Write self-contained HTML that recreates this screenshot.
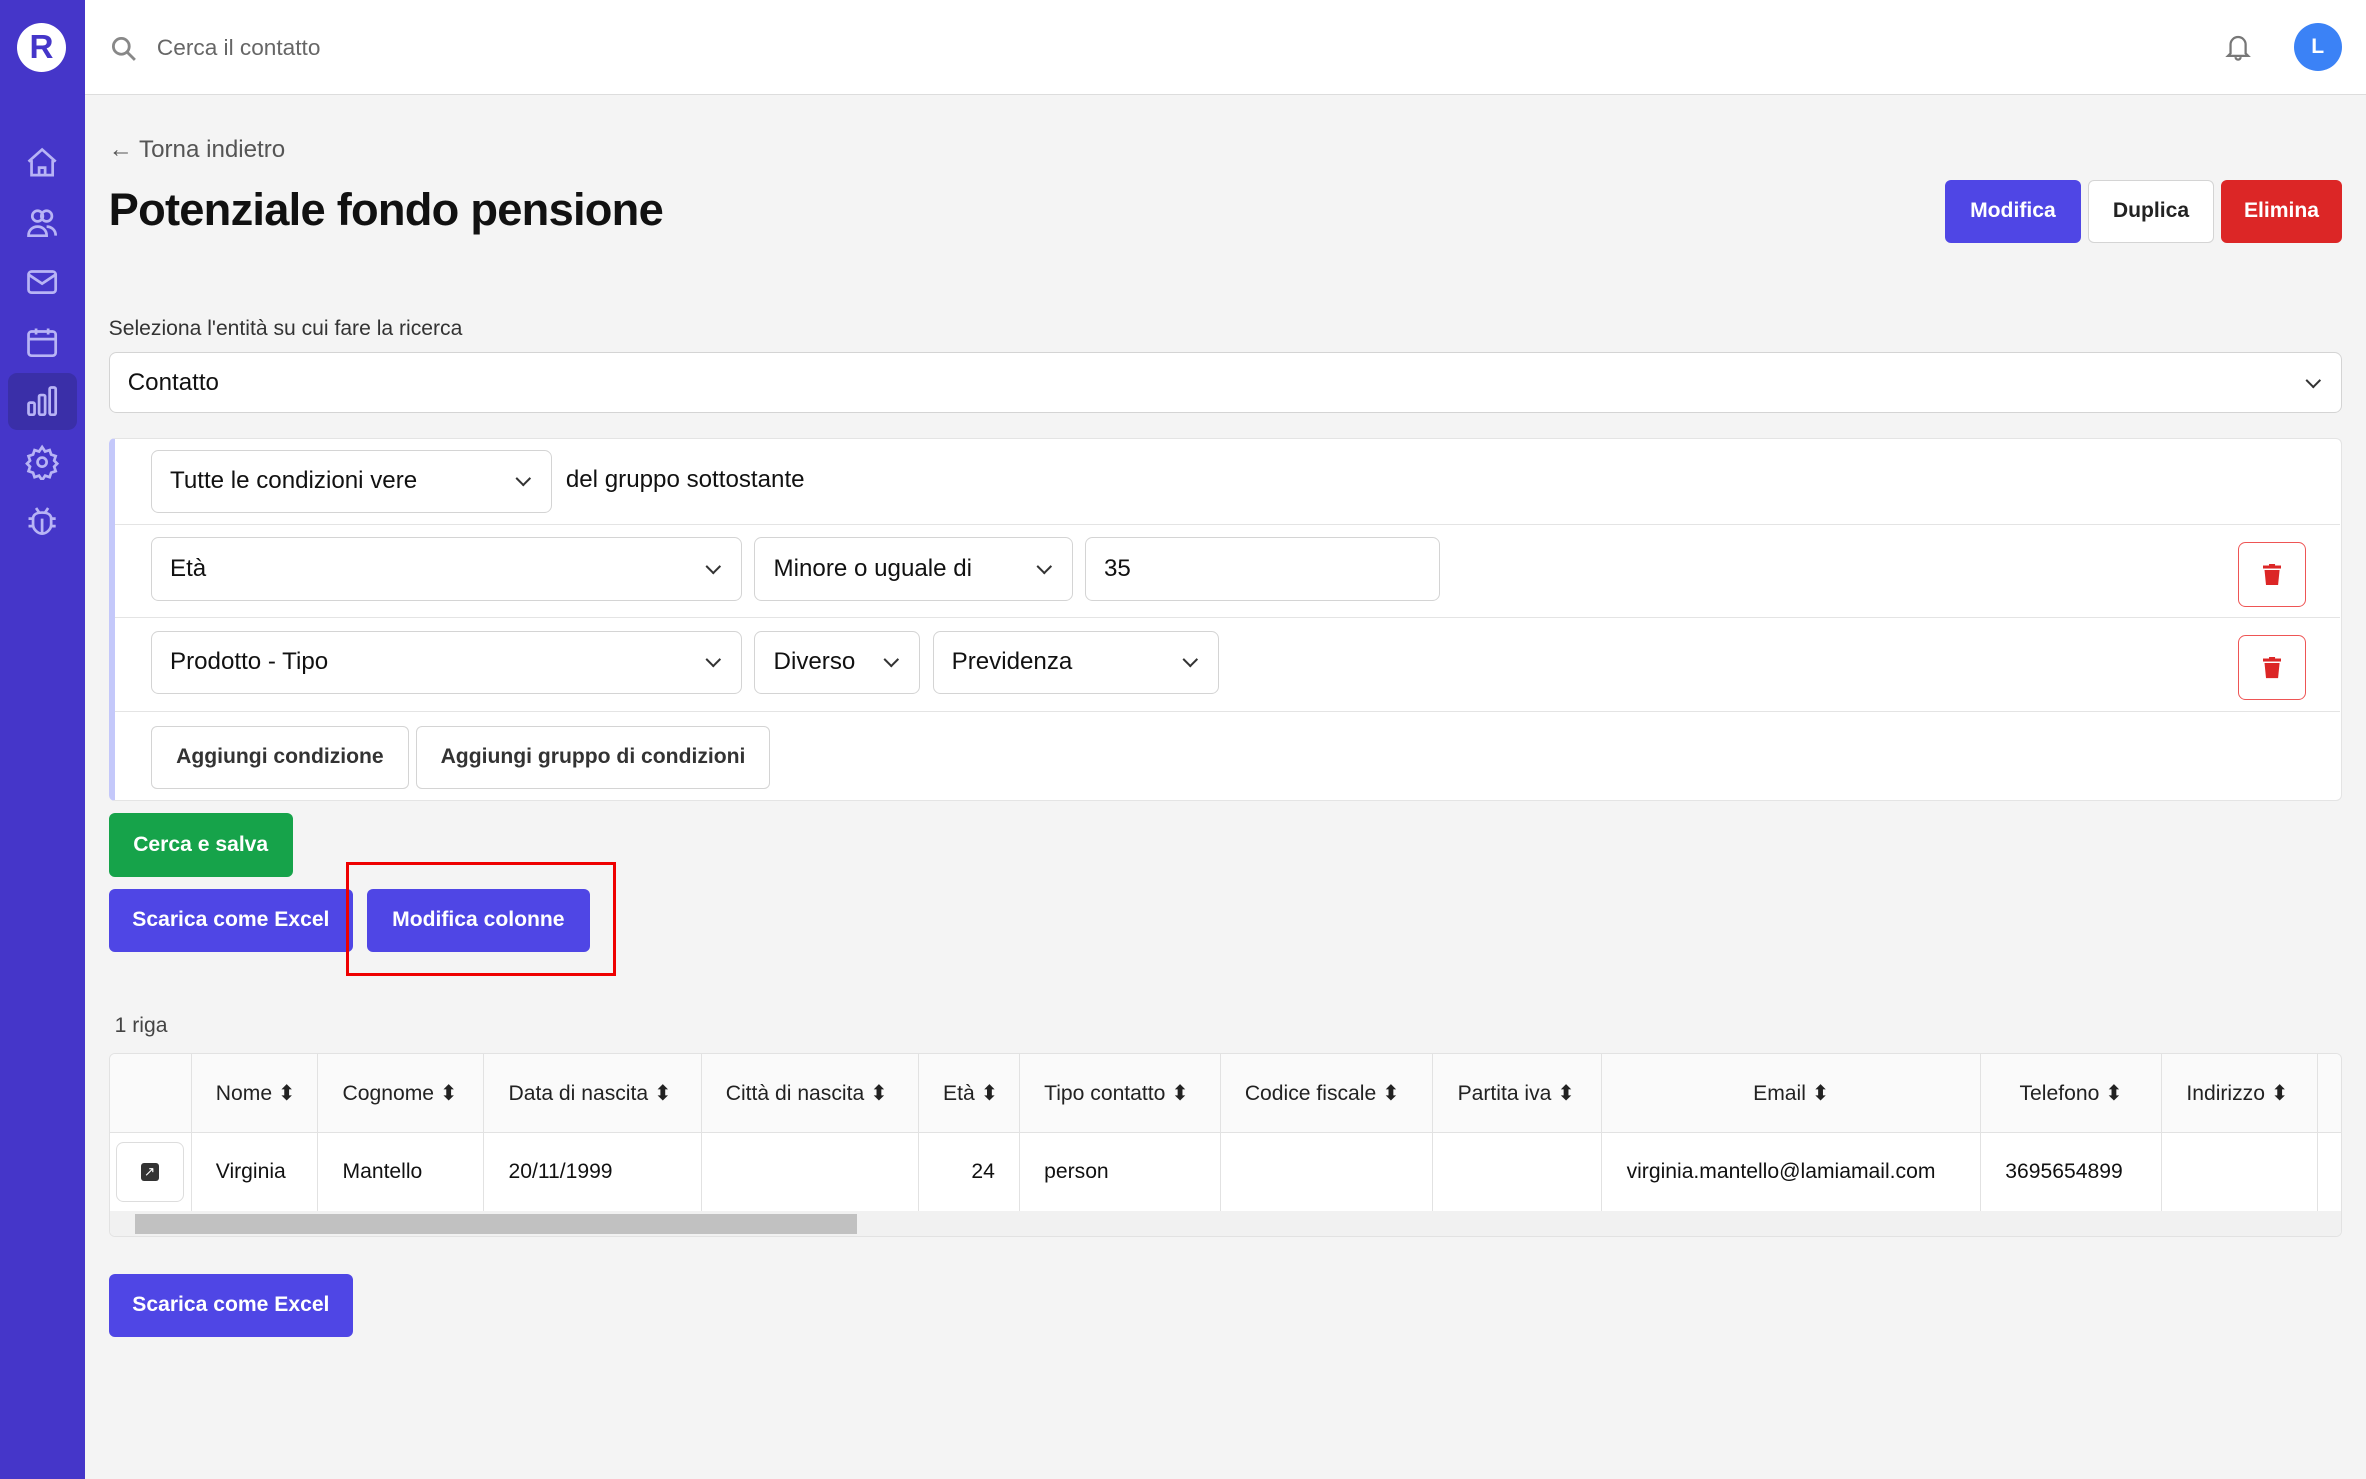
<!DOCTYPE html>
<html><head><meta charset="utf-8"><style>
html{zoom:1.50893}
*{box-sizing:border-box;margin:0;padding:0}
body{width:1568px;height:980px;background:#f4f4f4;font-family:"Liberation Sans",sans-serif;color:#111;position:relative;overflow:hidden}
.a{position:absolute}
.side{left:0;top:0;width:56px;height:980px;background:#4536c9}
.ic{left:16px;width:24px;height:24px}
.top{left:56px;top:0;width:1512px;height:63px;background:#fff;border-bottom:1px solid #ddd}
.btn{position:absolute;height:42px;border-radius:4px;font-weight:bold;font-size:14px;color:#fff;display:flex;align-items:center;justify-content:center}
.sel{position:absolute;height:42px;background:#fff;border:1px solid #d4d4d4;border-radius:5px;font-size:16px;display:flex;align-items:center;padding-left:12px}
.chev{position:absolute;right:15px;top:15px;width:7px;height:7px;border-right:1.5px solid #333;border-bottom:1.5px solid #333;transform:rotate(45deg)}
.wb{position:absolute;height:42px;background:#fff;border:1px solid #d4d4d4;border-radius:4px;font-size:14px;font-weight:bold;color:#333;display:flex;align-items:center;justify-content:center}
.trash{position:absolute;left:1483px;width:45px;height:43px;border:1px solid #e55;border-radius:5px;background:#fff}
table{border-collapse:collapse;font-size:14px;table-layout:fixed;width:1500px}
td,th{border-right:1px solid #e2e2e2;height:52px;padding:0 16px;white-space:nowrap;text-align:left;overflow:hidden}
th{font-weight:normal;color:#222;background:#fafafa;border-bottom:1px solid #e2e2e2}
td{background:#fff}
</style></head><body>
<div class="a side">
<div class="a" style="left:11px;top:15px;width:33px;height:33px;border-radius:50%;background:#fff;color:#4536c9;font-weight:bold;font-size:22px;text-align:center;line-height:33px">R</div>
<div class="a" style="left:5px;top:247px;width:46px;height:38px;background:#3a2fa8;border-radius:6px"></div>
<svg class="a ic" style="top:96px" viewBox="0 0 24 24" fill="none" stroke="#b8b4f5" stroke-width="1.8"><path d="M3 11L12 3l9 8M5 10v10h14V10M10 20v-5h4v5"/></svg>
<svg class="a ic" style="top:135px" viewBox="0 0 24 24" fill="none" stroke="#b8b4f5" stroke-width="1.8"><circle cx="9" cy="8" r="3.5"/><circle cx="15" cy="8" r="3.5"/><path d="M3 21c0-4 3-6 6-6s6 2 6 6zM15 15c3 0 6 2 6 6"/></svg>
<svg class="a ic" style="top:175px" viewBox="0 0 24 24" fill="none" stroke="#b8b4f5" stroke-width="1.8"><rect x="3" y="5" width="18" height="14" rx="2"/><path d="M3 7l9 6 9-6"/></svg>
<svg class="a ic" style="top:215px" viewBox="0 0 24 24" fill="none" stroke="#b8b4f5" stroke-width="1.8"><rect x="3" y="5" width="18" height="16" rx="2"/><path d="M3 10h18M8 3v4M16 3v4"/></svg>
<svg class="a ic" style="top:254px" viewBox="0 0 24 24" fill="none" stroke="#b8b4f5" stroke-width="1.8"><rect x="3" y="13" width="4" height="8" rx="1"/><rect x="10" y="8" width="4" height="13" rx="1"/><rect x="17" y="3" width="4" height="18" rx="1"/></svg>
<svg class="a ic" style="top:294px" viewBox="0 0 24 24" fill="none" stroke="#b8b4f5" stroke-width="1.8"><circle cx="12" cy="12" r="3"/><path d="M12 2l2 3 3-1 1 3 3 1-1 3 2 2-2 2 1 3-3 1-1 3-3-1-2 3-2-3-3 1-1-3-3-1 1-3-2-2 2-2-1-3 3-1 1-3 3 1z"/></svg>
<svg class="a ic" style="top:333px" viewBox="0 0 24 24" fill="none" stroke="#b8b4f5" stroke-width="1.8"><path d="M8 4l2 3M16 4l-2 3M6 11c0-3 3-4 6-4s6 1 6 4v4c0 3-3 6-6 6s-6-3-6-6zM6 11H3M18 11h3M6 16H3M18 16h3M12 11v10"/></svg>
</div>
<div class="a top">
<svg class="a" style="left:17px;top:23px" width="18" height="18" viewBox="0 0 24 24" fill="none" stroke="#888" stroke-width="2.5"><circle cx="10" cy="10" r="7"/><path d="M15 15l7 7"/></svg>
<div class="a" style="left:48px;top:23px;font-size:15px;color:#666">Cerca il contatto</div>
<svg class="a" style="left:1417px;top:21px" width="20" height="20" viewBox="0 0 24 24" fill="none" stroke="#777" stroke-width="1.8"><path d="M6 17V10a6 6 0 0112 0v7l2 2H4zM10 20a2 2 0 004 0"/></svg>
<div class="a" style="left:1464px;top:15px;width:32px;height:32px;border-radius:50%;background:#3b82f6;color:#fff;font-weight:bold;font-size:14px;text-align:center;line-height:32px">L</div>
</div>
<div class="a" style="left:72px;top:90px;font-size:16px;color:#555">← Torna indietro</div>
<div class="a" style="left:72px;top:122px;font-size:30px;font-weight:bold;letter-spacing:-0.5px">Potenziale fondo pensione</div>
<div class="btn" style="left:1289px;top:119px;width:90px;background:#4f46e5">Modifica</div>
<div class="wb" style="left:1384px;top:119px;width:83px;color:#222">Duplica</div>
<div class="btn" style="left:1472px;top:119px;width:80px;background:#dc2626">Elimina</div>
<div class="a" style="left:72px;top:210px;font-size:14px;color:#333">Seleziona l'entità su cui fare la ricerca</div>
<div class="sel" style="left:72px;top:233px;width:1480px;height:41px">Contatto<span class="chev"></span></div>
<div class="a" style="left:72px;top:290px;width:1480px;height:241px;background:#fff;border:1px solid #e4e4e4;border-left:4px solid #c4c8fa;border-radius:4px"></div>
<div class="a" style="left:76px;top:347px;width:1475px;border-top:1px solid #e4e4e4"></div>
<div class="a" style="left:76px;top:409px;width:1475px;border-top:1px solid #e4e4e4"></div>
<div class="a" style="left:76px;top:471px;width:1475px;border-top:1px solid #e4e4e4"></div>
<div class="sel" style="left:100px;top:298px;width:266px">Tutte le condizioni vere<span class="chev"></span></div>
<div class="a" style="left:375px;top:309px;font-size:16px">del gruppo sottostante</div>
<div class="sel" style="left:100px;top:356px;width:392px">Età<span class="chev"></span></div>
<div class="sel" style="left:500px;top:356px;width:211px">Minore o uguale di<span class="chev"></span></div>
<div class="sel" style="left:719px;top:356px;width:235px">35</div>
<div class="trash" style="top:359px"><svg style="position:absolute;left:16px;top:14px" width="12" height="14" viewBox="0 0 12 14" fill="#dc2626"><rect x="0" y="1" width="12" height="2"/><rect x="4" y="0" width="4" height="2"/><path d="M1 4h10l-1 10H2z"/></svg></div>
<div class="sel" style="left:100px;top:418px;width:392px">Prodotto - Tipo<span class="chev"></span></div>
<div class="sel" style="left:500px;top:418px;width:110px">Diverso<span class="chev"></span></div>
<div class="sel" style="left:618px;top:418px;width:190px">Previdenza<span class="chev"></span></div>
<div class="trash" style="top:421px"><svg style="position:absolute;left:16px;top:14px" width="12" height="14" viewBox="0 0 12 14" fill="#dc2626"><rect x="0" y="1" width="12" height="2"/><rect x="4" y="0" width="4" height="2"/><path d="M1 4h10l-1 10H2z"/></svg></div>
<div class="wb" style="left:100px;top:481px;width:171px">Aggiungi condizione</div>
<div class="wb" style="left:276px;top:481px;width:234px">Aggiungi gruppo di condizioni</div>
<div class="btn" style="left:72px;top:539px;width:122px;background:#16a34a">Cerca e salva</div>
<div class="btn" style="left:72px;top:589px;width:162px;background:#4f46e5">Scarica come Excel</div>
<div class="btn" style="left:243px;top:589px;width:148px;background:#4f46e5">Modifica colonne</div>
<div class="a" style="left:229px;top:571px;width:179px;height:76px;border:2px solid #e00"></div>
<div class="a" style="left:76px;top:672px;font-size:14px;color:#444">1 riga</div>
<div class="a" style="left:72px;top:698px;width:1480px;height:122px;border:1px solid #e2e2e2;border-radius:4px;overflow:hidden;background:#fff">
<table>
<colgroup><col style="width:54px"><col style="width:84px"><col style="width:110px"><col style="width:144px"><col style="width:144px"><col style="width:67px"><col style="width:133px"><col style="width:141px"><col style="width:112px"><col style="width:251px"><col style="width:120px"><col style="width:103px"><col style="width:37px"></colgroup>
<tr><th></th><th>Nome ⬍</th><th>Cognome ⬍</th><th>Data di nascita ⬍</th><th>Città di nascita ⬍</th><th>Età ⬍</th><th>Tipo contatto ⬍</th><th>Codice fiscale ⬍</th><th>Partita iva ⬍</th><th style="text-align:center">Email ⬍</th><th style="text-align:center">Telefono ⬍</th><th>Indirizzo ⬍</th><th></th></tr>
<tr><td style="padding:0 4px"><div style="width:45px;height:40px;border:1px solid #ddd;border-radius:5px;display:flex;align-items:center;justify-content:center"><div style="width:12px;height:12px;background:#333;border-radius:2px;color:#fff;font-size:9px;line-height:12px;text-align:center">↗</div></div></td><td>Virginia</td><td>Mantello</td><td>20/11/1999</td><td></td><td style="text-align:right">24</td><td>person</td><td></td><td></td><td>virginia.mantello@lamiamail.com</td><td>3695654899</td><td></td><td></td></tr>
</table>
<div class="a" style="left:0;top:104px;width:1480px;height:17px;background:#f1f1f1"></div>
<div class="a" style="left:17px;top:106px;width:478px;height:13px;background:#c1c1c1"></div>
</div>
<div class="btn" style="left:72px;top:844px;width:162px;background:#4f46e5">Scarica come Excel</div>
</body></html>
